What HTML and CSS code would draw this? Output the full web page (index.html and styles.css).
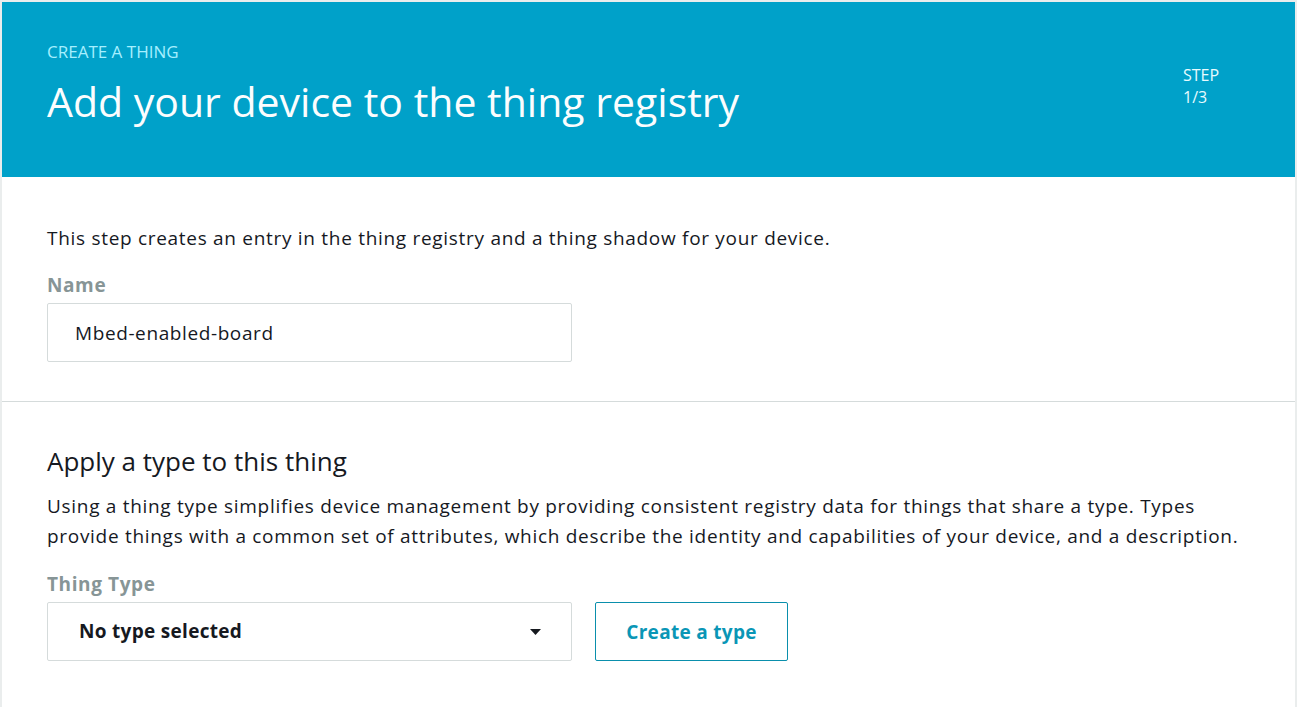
FILE: index.html
```html
<!DOCTYPE html>
<html>
<head>
<meta charset="utf-8">
<link rel="stylesheet" href="styles.css">
</head>
<body>
<div class="card">
  <header class="hero">
    <div class="hero-main">
      <div class="eyebrow">CREATE A THING</div>
      <h1 class="title">Add your device to the thing registry</h1>
    </div>
    <div class="step">STEP<br>1/3</div>
  </header>
  <section class="section first">
    <p class="text">This step creates an entry in the thing registry and a thing shadow for your device.</p>
    <div class="label">Name</div>
    <div class="input">Mbed-enabled-board</div>
  </section>
  <section class="section second">
    <h2 class="heading">Apply a type to this thing</h2>
    <p class="text para">Using a thing type simplifies device management by providing consistent registry data for things that share a type. Types provide things with a common set of attributes, which describe the identity and capabilities of your device, and a description.</p>
    <div class="label label2">Thing Type</div>
    <div class="row">
      <div class="select">
        <span>No type selected</span>
        <svg class="caret" width="11" height="6" viewBox="0 0 11 6"><path d="M0 0 L11 0 L5.5 6 Z" fill="#16191f"/></svg>
      </div>
      <button class="btn">Create a type</button>
    </div>
  </section>
</div>
</body>
</html>
```
FILE: styles.css
```css
html, body {
  margin: 0;
  padding: 0;
  background: #ffffff;
}
body {
  font-family: "Open Sans", "Noto Sans", sans-serif;
  color: #16191f;
}
.card {
  border: 2px solid #eaeded;
  border-bottom: none;
  min-height: 707px;
  box-sizing: border-box;
}
.hero {
  background: #00a1c9;
  height: 175px;
  box-sizing: border-box;
  padding: 38px 45px 0 45px;
  display: flex;
  justify-content: space-between;
}
.eyebrow {
  color: #a6efff;
  font-size: 17px;
  line-height: 24px;
}
.title {
  margin: 11px 0 0 0;
  color: #fbfdfe;
  font-weight: 400;
  font-size: 41px;
  line-height: 52px;
}
.step {
  color: #e8fbff;
  font-size: 16px;
  line-height: 22px;
  margin-top: 24px;
  width: 67px;
}
.section {
  padding: 0 45px;
}
.first {
  padding-top: 49px;
  padding-bottom: 39px;
  border-bottom: 1px solid #d5dbdb;
}
.second {
  padding-top: 44px;
}
.text {
  margin: 0;
  font-size: 19px;
  letter-spacing: 0.7px;
  line-height: 24px;
  color: #16191f;
}
.para {
  line-height: 30px;
  margin-top: 15px;
}
.label {
  margin-top: 23px;
  font-size: 19px;
  letter-spacing: 0.6px;
  line-height: 24px;
  font-weight: 700;
  color: #879596;
}
.label2 {
  margin-top: 21px;
}
.input {
  margin-top: 6px;
  width: 525px;
  height: 59px;
  box-sizing: border-box;
  border: 1px solid #d5dbdb;
  border-radius: 2px;
  padding: 0 27px;
  display: flex;
  align-items: center;
  font-size: 19px;
  letter-spacing: 0.6px;
  color: #16191f;
}
.heading {
  margin: 0;
  font-size: 26px;
  line-height: 30px;
  font-weight: 400;
  color: #16191f;
}
.row {
  margin-top: 6px;
  display: flex;
  gap: 23px;
}
.select {
  width: 525px;
  height: 59px;
  box-sizing: border-box;
  border: 1px solid #d5dbdb;
  border-radius: 2px;
  padding: 0 30px 2px 31px;
  display: flex;
  align-items: center;
  justify-content: space-between;
  font-size: 19px;
  letter-spacing: 0.3px;
  font-weight: 700;
  color: #16191f;
}
.caret {
  display: block;
  margin-top: 2px;
}
.btn {
  width: 193px;
  height: 59px;
  box-sizing: border-box;
  background: #ffffff;
  border: 1px solid #0a8fac;
  border-radius: 2px;
  font-family: inherit;
  font-size: 19px;
  letter-spacing: 0.3px;
  font-weight: 700;
  color: #0a96b6;
  padding: 0;
}
```
